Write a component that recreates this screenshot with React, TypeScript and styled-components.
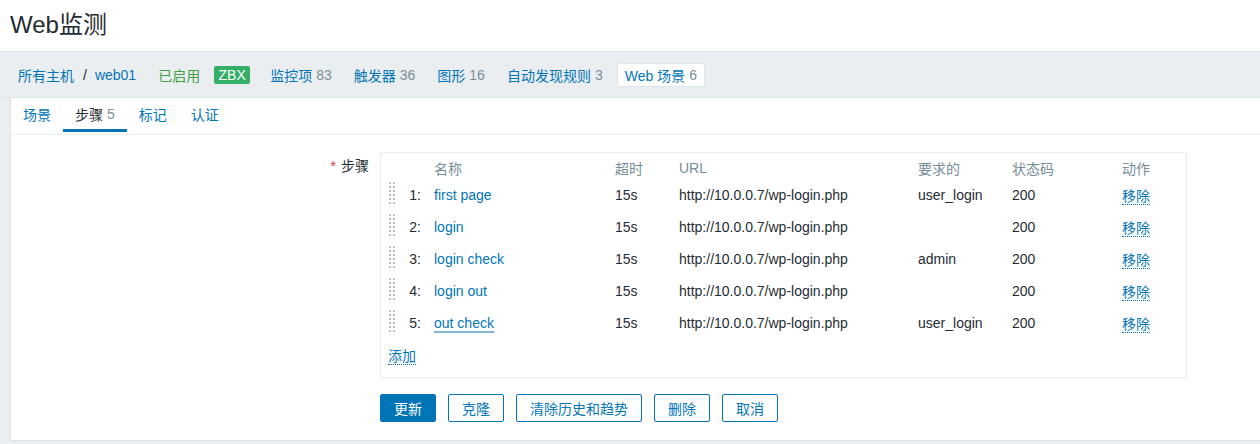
import React from "react";
import styled, { createGlobalStyle } from "styled-components";

const GlobalStyle = createGlobalStyle`
  html, body { margin: 0; padding: 0; }
  body {
    background: #ebeef0;
    font-family: "Liberation Sans", Arial, "Noto Sans CJK SC", sans-serif;
    font-size: 14px;
    color: #1f2c33;
  }
`;

const Header = styled.header`
  height: 51px;
  background: #ffffff;
  border-bottom: 1px solid #dfe4e7;
  display: flex;
  align-items: center;
  padding: 0 10px;
  box-sizing: content-box;
`;

const Title = styled.h1`
  margin: 0;
  font-size: 24px;
  font-weight: normal;
  color: #1f2c33;
  line-height: 1;
  transform: translateY(-1px);
`;

const NavBar = styled.nav`
  height: 45px;
  display: flex;
  align-items: center;
  padding: 0 10px;
  border-bottom: 1px solid #dfe4e7;
`;

const NavItem = styled.div`
  display: flex;
  align-items: center;
  padding: 0 8px;
  margin-left: 6px;
  white-space: nowrap;
  &:first-child { margin-left: 0; }
`;

const NavLink = styled.a`
  color: #0275b8;
  text-decoration: none;
`;

const Sep = styled.span`
  color: #1f2c33;
  margin: 0 8px 0 9px;
`;

const Count = styled.span`
  color: #768d99;
  margin-left: 4px;
`;

const Enabled = styled.span`
  color: #429e47;
`;

const Badge = styled.span`
  display: inline-flex;
  align-items: center;
  justify-content: center;
  width: 36px;
  height: 18px;
  background: #34af67;
  color: #ffffff;
  border-radius: 2px;
  font-size: 14px;
  margin-left: 6px;
  margin-right: 6px;
`;

const ActiveNavItem = styled(NavItem)`
  background: #ffffff;
  border: 1px solid #dfe4e7;
  border-radius: 2px;
  height: 22px;
  padding: 0 7px;
`;

const Panel = styled.main`
  margin-left: 10px;
  background: #ffffff;
  border-left: 1px solid #dfe4e7;
  border-bottom: 1px solid #dfe4e7;
  height: 342px;
`;

const Tabs = styled.ul`
  list-style: none;
  margin: 0;
  padding: 0;
  display: flex;
  height: 36px;
  border-bottom: 1px solid #ebeef0;
`;

const Tab = styled.li<{ $active?: boolean }>`
  display: flex;
  align-items: center;
  padding: 0 12px;
  height: 34px;
  color: #0275b8;
  box-sizing: border-box;
  border-bottom: 3px solid ${(p) => (p.$active ? "#0275b8" : "transparent")};
  ${(p) => (p.$active ? "color: #1f2c33;" : "")}
`;

const Form = styled.div`
  padding: 17px 0 0 0;
`;

const FormRow = styled.div`
  display: grid;
  grid-template-columns: 358px 807px;
  column-gap: 11px;
  align-items: start;
`;

const Label = styled.div`
  text-align: right;
  padding-top: 6px;
  line-height: 16px;
`;

const Req = styled.span`
  color: #e33734;
  margin-right: 5px;
`;

const TableBox = styled.div`
  border: 1px solid #ebeef0;
  padding: 4px 0 6px 7px;
`;

const Row = styled.div<{ $h?: number }>`
  display: grid;
  grid-template-columns: 18px 28px 181px 64px 239px 94px 110px 1fr;
  height: ${(p) => p.$h ?? 32}px;
  align-items: center;
`;

const HeadCell = styled.div`
  color: #768d99;
`;

const Cell = styled.div`
  white-space: nowrap;
`;

const WideCell = styled(Cell)`
  grid-column: 1 / 4;
`;

const NumCell = styled.div`
  text-align: right;
  padding-right: 13px;
`;

const NameLink = styled.a<{ $hover?: boolean }>`
  color: #0275b8;
  text-decoration: none;
  ${(p) => (p.$hover ? "border-bottom: 2px solid rgba(2,117,184,0.5);" : "")}
`;

const DottedLink = styled.a`
  color: #0275b8;
  text-decoration: none;
  border-bottom: 1px dotted #0275b8;
  cursor: pointer;
`;

const Handle = styled.svg`
  display: block;
  margin-top: -5px;
`;

const ButtonRow = styled.div`
  display: flex;
  gap: 12px;
  padding-left: 369px;
  margin-top: 16px;
`;

const Button = styled.button<{ $primary?: boolean }>`
  height: 28px;
  padding: 0 13px;
  border-radius: 2px;
  font-family: inherit;
  font-size: 14px;
  border: 1px solid #0275b8;
  background: ${(p) => (p.$primary ? "#0275b8" : "#ffffff")};
  color: ${(p) => (p.$primary ? "#ffffff" : "#0275b8")};
  cursor: pointer;
`;

const DragHandle = () => (
  <Handle width="8" height="22" viewBox="0 0 8 22">
    {[0, 1, 2, 3, 4, 5].map((r) =>
      [0, 1].map((c) => (
        <rect key={`${r}-${c}`} x={c * 4 + 1} y={r * 4} width="2" height="2" fill="#b9c4ca" />
      ))
    )}
  </Handle>
);

const steps = [
  { n: 1, name: "first page", url: "http://10.0.0.7/wp-login.php", req: "user_login", code: "200" },
  { n: 2, name: "login", url: "http://10.0.0.7/wp-login.php", req: "", code: "200" },
  { n: 3, name: "login check", url: "http://10.0.0.7/wp-login.php", req: "admin", code: "200" },
  { n: 4, name: "login out", url: "http://10.0.0.7/wp-login.php", req: "", code: "200" },
  { n: 5, name: "out check", url: "http://10.0.0.7/wp-login.php", req: "user_login", code: "200", hover: true },
];

export default function App() {
  return (
    <>
      <GlobalStyle />
      <Header>
        <Title>Web监测</Title>
      </Header>
      <NavBar>
        <NavItem>
          <NavLink>所有主机</NavLink>
          <Sep>/</Sep>
          <NavLink>web01</NavLink>
        </NavItem>
        <NavItem>
          <Enabled>已启用</Enabled>
        </NavItem>
        <Badge>ZBX</Badge>
        <NavItem>
          <NavLink>监控项</NavLink>
          <Count>83</Count>
        </NavItem>
        <NavItem>
          <NavLink>触发器</NavLink>
          <Count>36</Count>
        </NavItem>
        <NavItem>
          <NavLink>图形</NavLink>
          <Count>16</Count>
        </NavItem>
        <NavItem>
          <NavLink>自动发现规则</NavLink>
          <Count>3</Count>
        </NavItem>
        <ActiveNavItem>
          <NavLink>Web 场景</NavLink>
          <Count>6</Count>
        </ActiveNavItem>
      </NavBar>
      <Panel>
        <Tabs>
          <Tab>场景</Tab>
          <Tab $active>
            步骤<Count>5</Count>
          </Tab>
          <Tab>标记</Tab>
          <Tab>认证</Tab>
        </Tabs>
        <Form>
          <FormRow>
            <Label>
              <Req>*</Req>步骤
            </Label>
            <TableBox>
              <Row $h={22}>
                <div />
                <div />
                <HeadCell>名称</HeadCell>
                <HeadCell>超时</HeadCell>
                <HeadCell>URL</HeadCell>
                <HeadCell>要求的</HeadCell>
                <HeadCell>状态码</HeadCell>
                <HeadCell>动作</HeadCell>
              </Row>
              {steps.map((s) => (
                <Row key={s.n}>
                  <DragHandle />
                  <NumCell>{s.n}:</NumCell>
                  <Cell>
                    <NameLink $hover={s.hover}>{s.name}</NameLink>
                  </Cell>
                  <Cell>15s</Cell>
                  <Cell>{s.url}</Cell>
                  <Cell>{s.req}</Cell>
                  <Cell>{s.code}</Cell>
                  <Cell>
                    <DottedLink>移除</DottedLink>
                  </Cell>
                </Row>
              ))}
              <Row>
                <WideCell>
                  <DottedLink>添加</DottedLink>
                </WideCell>
              </Row>
            </TableBox>
          </FormRow>
          <ButtonRow>
            <Button $primary>更新</Button>
            <Button>克隆</Button>
            <Button>清除历史和趋势</Button>
            <Button>删除</Button>
            <Button>取消</Button>
          </ButtonRow>
        </Form>
      </Panel>
    </>
  );
}
